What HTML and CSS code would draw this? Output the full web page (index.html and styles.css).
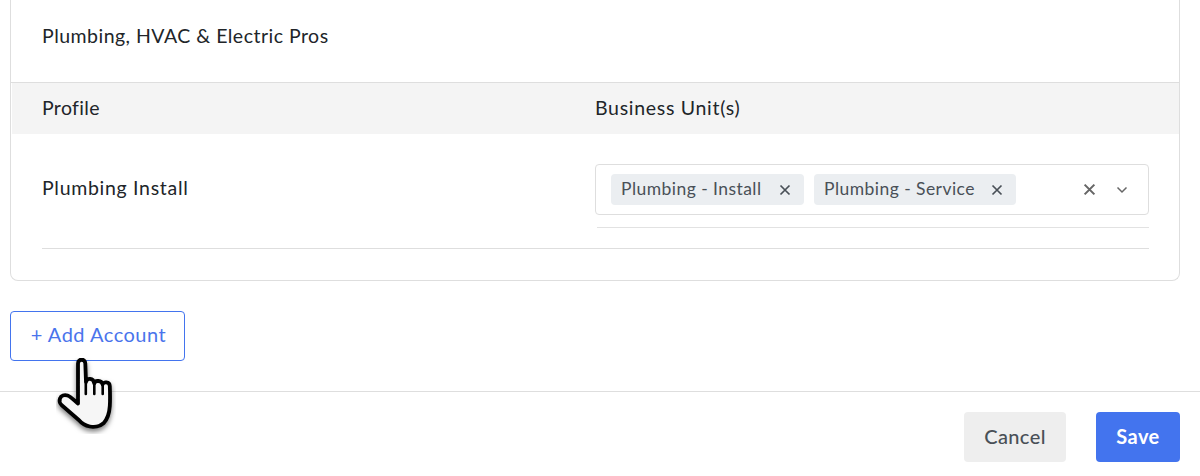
FILE: index.html
```html
<!DOCTYPE html>
<html lang="en">
<head>
<meta charset="utf-8">
<title>Accounts</title>
<link rel="stylesheet" href="styles.css">
</head>
<body>
<main class="page">
  <section class="card">
    <div class="title">Plumbing, HVAC &amp; Electric Pros</div>
    <div class="thead">
      <div class="col-profile">Profile</div>
      <div class="col-unit">Business Unit(s)</div>
    </div>
    <div class="row">
      <div class="col-profile row-name">Plumbing Install</div>
      <div class="col-unit">
        <div class="select">
          <span class="tag tag-a">Plumbing - Install
            <svg class="tag-x" viewBox="0 0 12 12"><path d="M1.5 1.5l9 9M10.5 1.5l-9 9"/></svg>
          </span>
          <span class="tag tag-b">Plumbing - Service
            <svg class="tag-x" viewBox="0 0 12 12"><path d="M1.5 1.5l9 9M10.5 1.5l-9 9"/></svg>
          </span>
          <span class="select-icons">
            <svg class="clear" viewBox="0 0 12 12"><path d="M1.5 1.5l9 9M10.5 1.5l-9 9"/></svg>
            <svg class="chev" viewBox="0 0 12 8"><path d="M1.5 1.5L6 6l4.5-4.5"/></svg>
          </span>
        </div>
        <div class="under"></div>
      </div>
    </div>
  </section>
  <div class="add-wrap">
    <button class="add" type="button">+ Add Account</button>
    <svg class="hand" viewBox="0 0 60 76">
      <defs><filter id="sh" x="-30%" y="-30%" width="160%" height="160%"><feDropShadow dx="0" dy="3" stdDeviation="2.500" flood-color="#000" flood-opacity=".5"/></filter></defs>
      <path filter="url(#sh)" d="M22 5.500c0-5 7.300-5 7.300 0L30 24c.5-4.500 7.500-4.500 8.300 1.500 .5-3.500 7.500-3.500 8.300 1 .5-3 7-3 7.200 1.500 .3 8 .4 14 0 20-.5 8-2.500 13-6 17-4 3.500-10 4.500-14 3.500-5-1-8-3-11-6.500L5.500 47c-2-2-2.500-4-1.500-6.500 1-3 4.500-4 7.500-3 3 1 7 5 10.500 8z" fill="#f6f6f6" stroke="#000" stroke-width="3.800" stroke-linejoin="round"/>
      <path d="M29.800 24v12M38.300 25v11M46.700 27v9" fill="none" stroke="#000" stroke-width="2.600" stroke-linecap="round"/>
    </svg>
  </div>
  <footer class="footer">
    <button class="btn cancel" type="button">Cancel</button>
    <button class="btn save" type="button">Save</button>
  </footer>
</main>
</body>
</html>
```
FILE: styles.css
```css
* { box-sizing: border-box; }
html, body { margin: 0; padding: 0; background: #fff; }
body {
  font-family: "Lato", "Noto Sans", sans-serif;
  font-size: 19.500px;
  color: #212529;
  height: 476px;
  overflow: hidden;
}
.card {
  margin: 0 20px 0 10px;
  height: 281px;
  border: 1px solid #dedede;
  border-top: 0;
  border-radius: 0 0 8px 8px;
}
.title {
  height: 83px;
  padding: 24px 0 0 31px;
  line-height: 24px;
  letter-spacing: .48px;
  border-bottom: 1px solid #dedede;
}
.thead {
  display: flex;
  height: 51px;
  margin-left: 1px;
  padding-bottom: 2px;
  background: #f4f4f4;
  align-items: center;
  letter-spacing: .35px;
}
.col-profile { width: 583px; flex: none; }
.thead .col-profile { padding-left: 30px; }
.thead .col-unit { flex: 1; letter-spacing: .7px; }
.col-unit { flex: 1; }
.row {
  display: flex;
  padding-top: 30px;
  height: 115px;
  letter-spacing: .7px;
  background-image: linear-gradient(#dedede, #dedede);
  background-repeat: no-repeat;
  background-size: 1107px 1px;
  background-position: 31px 114px;
}
.row .col-profile { padding-left: 31px; }
.row-name { padding-top: 12px; line-height: 24px; }
.row .col-unit { padding: 0 30px 0 1px; }
.select {
  display: flex;
  align-items: center;
  gap: 10px;
  height: 51px;
  padding: 0 15px;
  border: 1px solid #dedede;
  border-radius: 4px;
}
.tag {
  display: inline-flex;
  align-items: center;
  justify-content: space-between;
  height: 31px;
  padding: 0 13px 2px 10px;
  background: #ebeef1;
  border-radius: 4px;
  color: #495057;
  font-size: 17.500px;
  letter-spacing: .45px;
  white-space: nowrap;
}
.tag-a { width: 193px; }
.tag-b { width: 202px; }
.tag-x {
  width: 12px;
  height: 12px;
  margin-top: 2px;
  stroke: #495057;
  stroke-width: 1.700;
  fill: none;
}
.select-icons {
  margin-left: auto;
  display: flex;
  align-items: center;
  gap: 20px;
  margin-right: 5px;
}
.clear { width: 13px; height: 13px; stroke: #666; stroke-width: 1.900; fill: none; }
.chev { width: 12px; height: 8px; stroke: #666; stroke-width: 1.500; fill: none; }
.under {
  height: 1px;
  margin: 12px 0 0 2px;
  background: #e2e2e2;
}
.add-wrap {
  position: relative;
  padding: 30px 0 0 10px;
  height: 111px;
  border-bottom: 1px solid #dedede;
}
.add {
  width: 175px;
  height: 50px;
  padding: 0 0 4px 2px;
  background: #fff;
  border: 1px solid #4374ee;
  border-radius: 4px;
  color: #4a74ec;
  font: inherit;
  font-size: 20px;
  letter-spacing: .5px;
}
.hand {
  position: absolute;
  left: 56px;
  top: 77px;
  width: 60px;
  height: 76px;
}
.footer {
  display: flex;
  justify-content: flex-end;
  gap: 30px;
  padding: 20px 20px 0 0;
}
.btn {
  height: 50px;
  padding: 0 0 2px;
  border: 0;
  border-radius: 4px;
  font: inherit;
  font-size: 20px;
  font-weight: 700;
  letter-spacing: .4px;
}
.cancel { width: 102px; background: #eee; color: #495057; font-weight: 500; }
.save { width: 84px; background: #4374ee; color: #fff; }
```
